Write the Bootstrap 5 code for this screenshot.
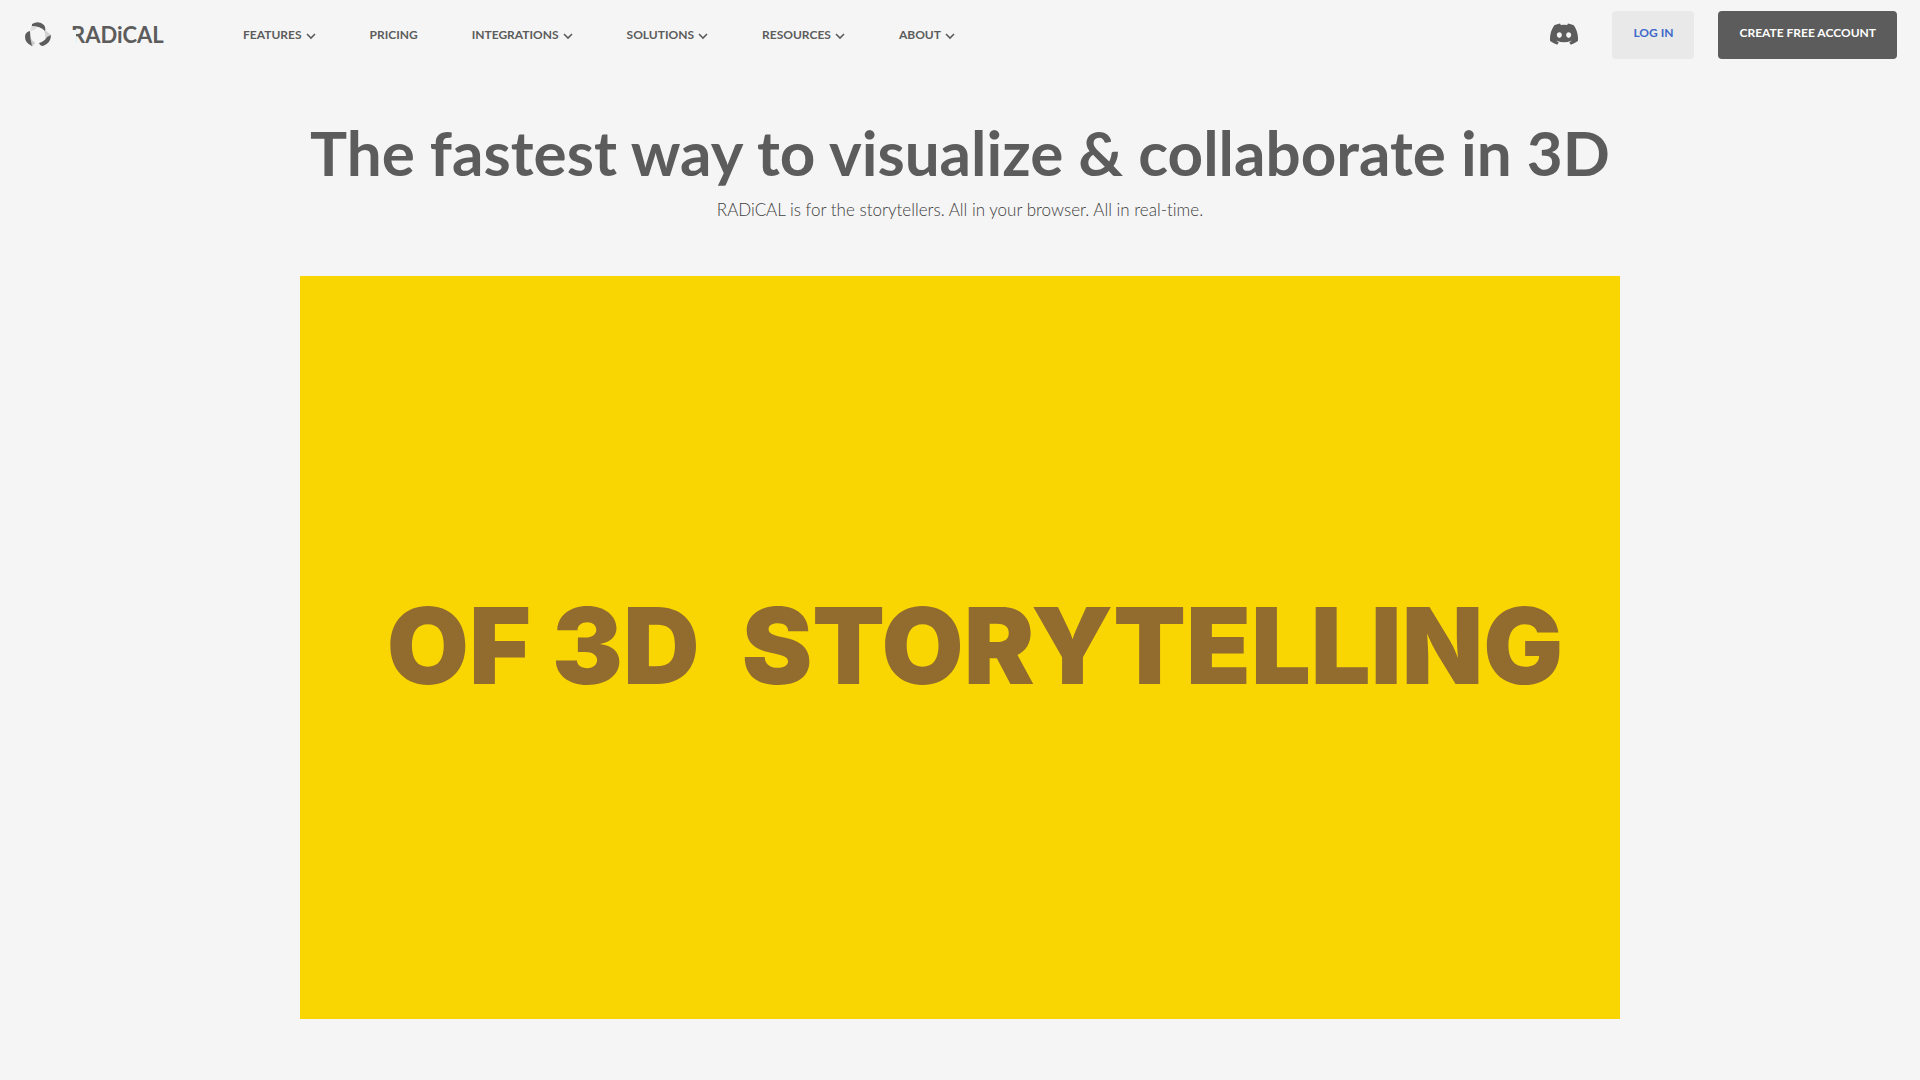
<!DOCTYPE html>
<html lang="en">
<head>
<meta charset="utf-8">
<meta name="viewport" content="width=device-width, initial-scale=1">
<title>RADiCAL</title>
<link rel="stylesheet" href="https://cdn.jsdelivr.net/npm/bootstrap@5.3.0/dist/css/bootstrap.min.css">
<style>
  body { background: #f5f5f5; color: #5c5c5c; font-family: Lato, sans-serif; font-variant-ligatures: none; }
  a { color: inherit; text-decoration: none; }
  .site-header { padding: 11px 23px 11px 25px; }
  .brand-link { gap: 19px; width: 218px; }
  .wordmark { position: relative; font-size: 22px; line-height: 24px; font-weight: 700; }
  /* the logo's R is drawn without its stem */
  .wordmark::before { content: ""; position: absolute; left: 0; top: 7px; width: 5px; height: 15px; background: #f5f5f5; }
  .main-menu { gap: 54px; }
  .menu-btn { font-size: 12px; line-height: 16px; font-weight: 700; color: #5c5c5c; gap: 4px; }
  .menu-btn svg { margin-top: 2px; }
  .cta { font-size: 12px; line-height: 16px; font-weight: 700; height: 48px; padding: 0 21px 4px; border-radius: 4px; }
  .cta-login { background: #e9e9e9; color: #3f68c9; }
  .cta-create { background: #5c5c5c; color: #fff; margin-left: 24px; }
  .discord-link { margin-right: 34px; padding-bottom: 2px; }
  .hero { padding-top: 46px; }
  .hero-title { font-size: 62px; line-height: 72px; font-weight: 700; }
  .hero-sub { font-size: 17px; line-height: 24px; font-weight: 300; color: #404040; margin: 10px 0 54px; }
  .reel { max-width: 1320px; background: #f9d602; }
  .reel-text { font-family: Inter, sans-serif; font-weight: 900; font-size: 106px; line-height: 128px; color: #926b2f; white-space: pre; padding: 0 0 2px 30px; }
</style>
</head>
<body>
<header class="site-header d-flex align-items-center">
  <a class="brand-link d-flex align-items-center" href="#" aria-label="RADiCAL home">
    <svg width="27" height="26" viewBox="0 0 27 26" aria-hidden="true">
      <path d="M18 6L26 13L20 18Q21 11 18 6Z" fill="#d2d2d2"/>
      <path d="M5 14L3 20L7 25L10 21Q6 18 5 14Z" fill="#cccccc"/>
      <path d="M7 2L5 9L9 8L14 4Z" fill="#dedede"/>
      <path d="M7 2Q14-2 19 3Q21 6 20 9Q15 4 7 4Z" fill="#5c5c5c"/>
      <path d="M5 9Q5 17 7 24Q0 21 0 15Q0 10 5 9Z" fill="#5c5c5c"/>
      <path d="M26 13Q26 21 18 24Q15 24 14 21Q20 19 22 15Z" fill="#5c5c5c"/>
    </svg>
    <span class="wordmark">RADiCAL</span>
  </a>
  <nav class="main-menu d-flex align-items-center" aria-label="Main">
    <button type="button" class="menu-btn btn p-0 border-0 d-flex align-items-center">FEATURES <svg width="10" height="7" viewBox="0 0 10 7" fill="none" stroke="currentColor" stroke-width="1.600" aria-hidden="true"><path d="M1 1l4 4 4-4"/></svg></button>
    <a class="menu-btn" href="#">PRICING</a>
    <button type="button" class="menu-btn btn p-0 border-0 d-flex align-items-center">INTEGRATIONS <svg width="10" height="7" viewBox="0 0 10 7" fill="none" stroke="currentColor" stroke-width="1.600" aria-hidden="true"><path d="M1 1l4 4 4-4"/></svg></button>
    <button type="button" class="menu-btn btn p-0 border-0 d-flex align-items-center">SOLUTIONS <svg width="10" height="7" viewBox="0 0 10 7" fill="none" stroke="currentColor" stroke-width="1.600" aria-hidden="true"><path d="M1 1l4 4 4-4"/></svg></button>
    <button type="button" class="menu-btn btn p-0 border-0 d-flex align-items-center">RESOURCES <svg width="10" height="7" viewBox="0 0 10 7" fill="none" stroke="currentColor" stroke-width="1.600" aria-hidden="true"><path d="M1 1l4 4 4-4"/></svg></button>
    <button type="button" class="menu-btn btn p-0 border-0 d-flex align-items-center">ABOUT <svg width="10" height="7" viewBox="0 0 10 7" fill="none" stroke="currentColor" stroke-width="1.600" aria-hidden="true"><path d="M1 1l4 4 4-4"/></svg></button>
  </nav>
  <div class="d-flex align-items-center ms-auto">
    <a class="discord-link d-flex" href="#" aria-label="Discord">
      <svg width="28" height="22" viewBox="0 0 127 96" fill="currentColor" aria-hidden="true"><path d="M107.700 8.070A105.150 105.150 0 0 0 81.470 0a72.060 72.060 0 0 0-3.360 6.830 97.680 97.680 0 0 0-29.110 0A72.370 72.370 0 0 0 45.640 0a105.890 105.890 0 0 0-26.250 8.090C2.790 32.650-1.710 56.600.540 80.210a105.730 105.730 0 0 0 32.170 16.150 77.700 77.700 0 0 0 6.890-11.110 68.420 68.420 0 0 1-10.850-5.180c.91-.66 1.800-1.340 2.660-2a75.570 75.570 0 0 0 64.320 0c.87.71 1.760 1.390 2.660 2a68.680 68.680 0 0 1-10.870 5.190 77 77 0 0 0 6.890 11.100 105.250 105.250 0 0 0 32.190-16.140c2.640-27.380-4.510-51.110-18.900-72.150ZM42.450 65.690C36.180 65.690 31 60 31 53s5-12.740 11.430-12.740S54 46 53.890 53s-5.050 12.690-11.440 12.690Zm42.240 0C78.410 65.690 73.250 60 73.250 53s5-12.740 11.440-12.740S96.230 46 96.120 53s-5.040 12.690-11.430 12.690Z"/></svg>
    </a>
    <a class="cta cta-login d-flex align-items-center" href="#">LOG IN</a>
    <a class="cta cta-create d-flex align-items-center" href="#">CREATE FREE ACCOUNT</a>
  </div>
</header>
<main class="hero text-center">
  <h1 class="hero-title mb-0">The fastest way to visualize &amp; collaborate in 3D</h1>
  <p class="hero-sub">RADiCAL is for the storytellers. All in your browser. All in real-time.</p>
  <div class="reel ratio ratio-16x9 mx-auto">
    <div class="d-flex align-items-center justify-content-center"><span class="reel-text">OF 3D  STORYTELLING</span></div>
  </div>
</main>
<script src="https://cdn.jsdelivr.net/npm/bootstrap@5.3.0/dist/js/bootstrap.bundle.min.js"></script>
</body>
</html>
